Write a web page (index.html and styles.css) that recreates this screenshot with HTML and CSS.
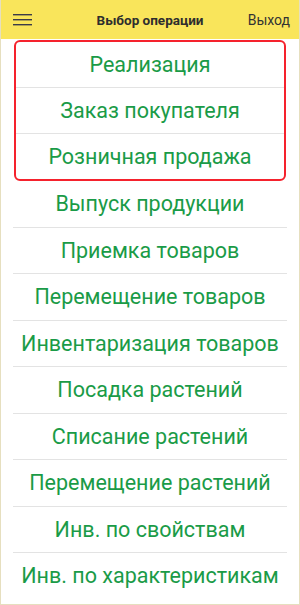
FILE: index.html
```html
<!DOCTYPE html>
<html lang="ru">
<head>
    <meta charset="UTF-8">
    <meta name="viewport" content="width=device-width, initial-scale=1.0">
    <title>Выбор операции</title>
    <link rel="stylesheet" href="styles.css">
</head>
<body>
    <div class="screen">
        <div class="topbar">
            <div class="menu-btn">
                <svg width="19" height="12" viewBox="0 0 19 12">
                    <rect x="0" y="0" width="19" height="1.4" fill="#3b3b48"/>
                    <rect x="0" y="5" width="19" height="1.4" fill="#3b3b48"/>
                    <rect x="0" y="10" width="19" height="1.4" fill="#3b3b48"/>
                </svg>
            </div>
            <div class="title">Выбор операции</div>
            <div class="exit">Выход</div>
        </div>

        <div class="list">
            <div class="group">
                <div class="item">Реализация</div>
                <div class="item">Заказ покупателя</div>
                <div class="item">Розничная продажа</div>
            </div>
            <div class="item">Выпуск продукции</div>
            <div class="item">Приемка товаров</div>
            <div class="item">Перемещение товаров</div>
            <div class="item">Инвентаризация товаров</div>
            <div class="item">Посадка растений</div>
            <div class="item">Списание растений</div>
            <div class="item">Перемещение растений</div>
            <div class="item">Инв. по свойствам</div>
            <div class="item">Инв. по характеристикам</div>
        </div>
    </div>
</body>
</html>
```

FILE: styles.css
```css
body {
    margin: 0;
    font-family: Roboto, "Noto Sans", sans-serif;
    background: #fff;
}
.screen {
    width: 300px;
    height: 605px;
    box-sizing: border-box;
    border: 1px solid #e6dfbf;
    border-top: none;
    overflow: hidden;
}
.topbar {
    height: 39px;
    margin: 0 -1px;
    background: #f9e55b;
    display: grid;
    grid-template-columns: 60px 1fr 60px;
    align-items: center;
}
.menu-btn {
    padding-left: 13px;
    display: flex;
    align-items: center;
}
.title {
    text-align: center;
    font-weight: bold;
    font-size: 13.5px;
    color: #2e2e2e;
}
.exit {
    text-align: right;
    padding-right: 10px;
    font-size: 14px;
    color: #333;
}
.list {
    padding: 1px 12px 0 12px;
}
.group {
    border: 2px solid #f5222d;
    border-radius: 6px;
    margin: 0 1px;
}
.item {
    height: 45.5px;
    line-height: 45.5px;
    text-align: center;
    font-size: 21.5px;
    color: #1a9b47;
    white-space: nowrap;
    border-top: 1px solid #e3e3e3;
}
.group .item:first-child,
.group + .item {
    border-top: none;
}
.group .item:first-child {
    height: 44.5px;
}
.group .item:last-child {
    height: 44.5px;
}
.group + .item {
    height: 46px;
}
```
